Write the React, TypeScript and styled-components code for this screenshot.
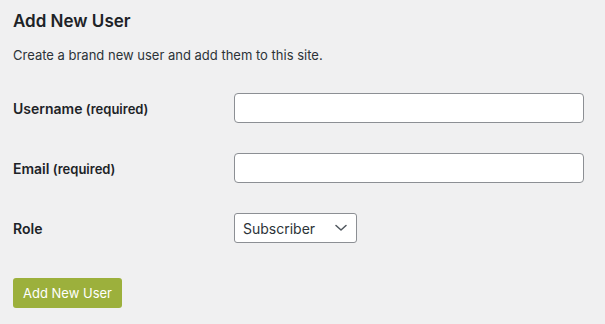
import React, { FC } from "react";
import styled, { createGlobalStyle } from "styled-components";

const GlobalStyle = createGlobalStyle`
  html, body {
    margin: 0;
    padding: 0;
    background: #f0f0f1;
  }
  body {
    font-family: Inter, "Liberation Sans", sans-serif;
    color: #1d2327;
  }
`;

interface IField {
  label: string;
  required?: boolean;
  children: React.ReactNode;
}

const Field: FC<IField> = (props) => {
  return (
    <Row>
      <Label>
        {props.label}
        {props.required ? <Required> (required)</Required> : <></>}
      </Label>
      <Control>{props.children}</Control>
    </Row>
  );
};

const App: FC = () => {
  return (
    <>
      <GlobalStyle />
      <Wrapper>
        <Title>Add New User</Title>
        <Description>Create a brand new user and add them to this site.</Description>

        <Form>
          <Field label="Username" required>
            <TextInput type="text" />
          </Field>
          <Field label="Email" required>
            <TextInput type="email" />
          </Field>
          <Field label="Role">
            <SelectBox>
              <span>Subscriber</span>
              <svg width="12" height="8" viewBox="0 0 12 8" fill="none">
                <path
                  d="M1 1.5 L6 6 L11 1.5"
                  stroke="#50575e"
                  strokeWidth="1.5"
                  strokeLinecap="round"
                  strokeLinejoin="round"
                />
              </svg>
            </SelectBox>
          </Field>
        </Form>

        <SubmitButton type="button">Add New User</SubmitButton>
      </Wrapper>
    </>
  );
};

const Wrapper = styled.div`
  padding: 10px 13px;
  width: 605px;
  height: 324px;
  box-sizing: border-box;
`;

const Title = styled.h1`
  margin: 0;
  font-size: 17px;
  line-height: 22px;
  font-weight: 600;
  color: #1d2327;
`;

const Description = styled.p`
  margin: 14px 0 0;
  font-size: 13px;
  line-height: 18px;
  color: #2c3338;
`;

const Form = styled.div`
  margin-top: 29px;
  display: flex;
  flex-direction: column;
  gap: 30px;
`;

const Row = styled.div`
  display: grid;
  grid-template-columns: 221px 1fr;
  align-items: center;
  height: 30px;
`;

const Label = styled.div`
  font-size: 14px;
  font-weight: 600;
  color: #1d2327;
`;

const Required = styled.span`
  font-size: 13px;
`;

const Control = styled.div`
  display: flex;
`;

const TextInput = styled.input`
  width: 350px;
  height: 30px;
  box-sizing: border-box;
  border: 1px solid #8c8f94;
  border-radius: 4px;
  background: #fff;
  padding: 0 8px;
  font-family: inherit;
  font-size: 14px;
  outline: none;
`;

const SelectBox = styled.div`
  width: 123px;
  height: 30px;
  box-sizing: border-box;
  border: 1px solid #8c8f94;
  border-radius: 3px;
  background: #fff;
  padding: 0 8px 0 8px;
  display: flex;
  align-items: center;
  justify-content: space-between;
  font-size: 14px;
  color: #2c3338;

  svg {
    margin-right: 1px;
  }
`;

const SubmitButton = styled.button`
  margin-top: 35px;
  height: 30px;
  width: 109px;
  padding: 0;
  border: none;
  border-radius: 3px;
  background: #9cb03c;
  color: #fff;
  font-family: inherit;
  font-size: 13px;
`;

export default App;
